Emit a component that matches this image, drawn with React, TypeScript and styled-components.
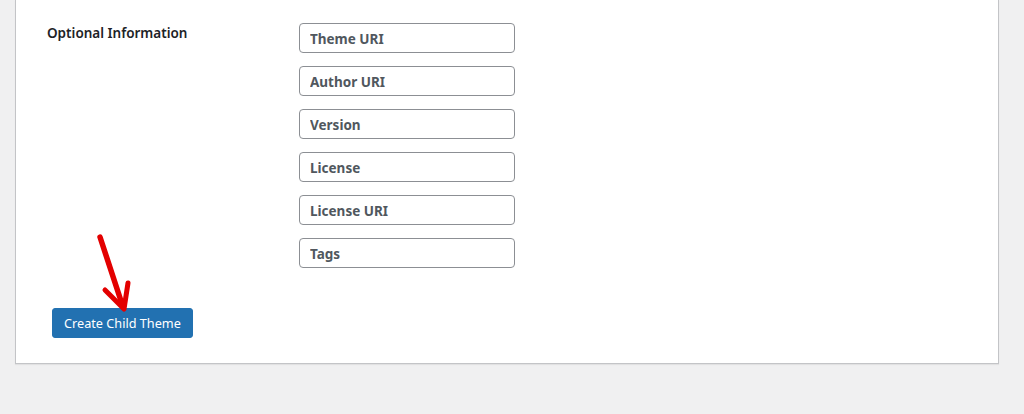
import { FC } from 'react';
import styled, { createGlobalStyle } from 'styled-components';

const GlobalStyle = createGlobalStyle`
  html, body {
    margin: 0;
    padding: 0;
    background: #f0f0f1;
    font-family: "Noto Sans", "Open Sans", sans-serif;
    color: #1d2327;
  }
`;

const Page = styled.div`
  width: 1024px;
  height: 414px;
  overflow: hidden;
  padding-left: 15px;
  box-sizing: border-box;
`;

const Panel = styled.div`
  position: relative;
  width: 984px;
  box-sizing: border-box;
  background: #fff;
  border: 1px solid #c3c4c7;
  border-top: none;
  box-shadow: 0 1px 1px rgba(0, 0, 0, 0.06);
  padding: 23px 0 25px 31px;
`;

const FieldRow = styled.div`
  display: grid;
  grid-template-columns: 252px 216px;
`;

const Label = styled.div`
  font-size: 13.5px;
  font-weight: 600;
  line-height: 19px;
  padding-top: 1px;
  color: #1d2327;
`;

const Fields = styled.div`
  display: flex;
  flex-direction: column;
  gap: 13px;
`;

const Input = styled.input`
  box-sizing: border-box;
  width: 216px;
  height: 30px;
  border: 1px solid #8c8f94;
  border-radius: 4px;
  padding: 2px 10px 0;
  font-family: inherit;
  font-size: 13.5px;
  font-weight: 700;
  color: #2c3338;
  background: #fff;

  &::placeholder {
    color: #50575e;
    opacity: 1;
  }
`;

const Button = styled.button`
  margin: 40px 0 0 5px;
  height: 30px;
  padding: 0 11px;
  background: #2271b1;
  border: 1px solid #2271b1;
  border-radius: 3px;
  color: #fff;
  font-family: inherit;
  font-size: 12.7px;
  line-height: 28px;
`;

const Arrow = styled.svg`
  position: absolute;
  left: 80px;
  top: 230px;
  pointer-events: none;
`;

const fields = ['Theme URI', 'Author URI', 'Version', 'License', 'License URI', 'Tags'];

const App: FC = () => (
  <Page>
    <GlobalStyle />
    <Panel>
      <FieldRow>
        <Label>Optional Information</Label>
        <Fields>
          {fields.map((f) => (
            <Input key={f} placeholder={f} />
          ))}
        </Fields>
      </FieldRow>
      <Button>Create Child Theme</Button>
      <Arrow width="60" height="85" viewBox="0 0 60 85">
        <g stroke="#e30000" strokeLinecap="round" strokeLinejoin="round" fill="none">
          <path d="M4 7 L27 77" strokeWidth="5.5" />
          <path d="M9 60 L28 79 L32 53" strokeWidth="5" />
        </g>
      </Arrow>
    </Panel>
  </Page>
);

export default App;
